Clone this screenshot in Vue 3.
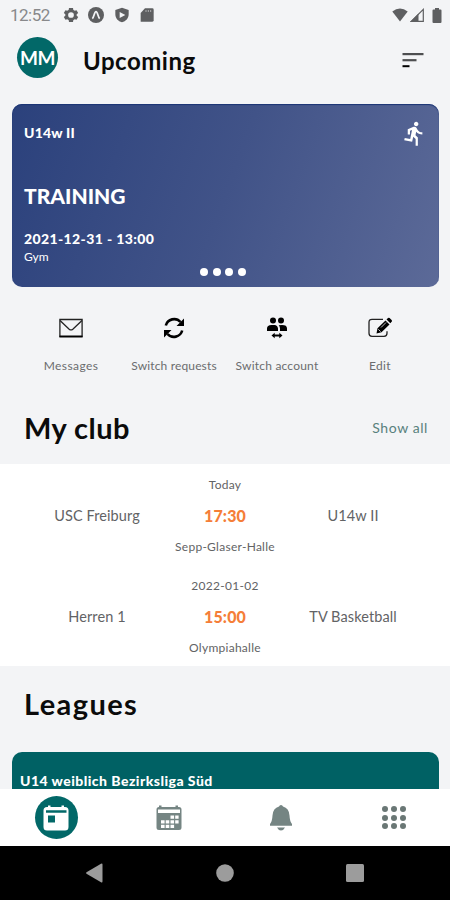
<template>
    <div class="phone">
        <!-- Status bar -->
        <div class="status">
            <span class="clock">12:52</span>
            <svg class="st-gear" viewBox="0 0 24 24"><path fill-rule="evenodd" d="M20.500 13.200a8 8 0 0 0 0-2.400l2.300-1.800-2.500-4.300-2.800 1.100a8 8 0 0 0-2-1.200L15 1.500H9l-.5 3.100a8 8 0 0 0-2 1.200L3.700 4.700 1.200 9l2.300 1.800a8 8 0 0 0 0 2.400L1.200 15l2.500 4.300 2.800-1.100a8 8 0 0 0 2 1.200l.5 3.100h6l.5-3.100a8 8 0 0 0 2-1.200l2.800 1.100 2.500-4.300zM12 16.300a4.300 4.300 0 1 1 0-8.600 4.300 4.300 0 0 1 0 8.600z" /></svg>
            <svg class="st-app" viewBox="0 0 24 24"><circle cx="12" cy="12" r="12" /><path class="line" d="M6.500 17.500C9 15.500 9.500 7 12 7s3 8.500 5.500 10.500" /></svg>
            <svg class="st-shield" viewBox="0 0 24 24"><path fill-rule="evenodd" d="M12 1 2 4.500V11c0 6 4.200 10.500 10 12 5.800-1.500 10-6 10-12V4.500zM8.500 7.500l8.500 4.500-8.500 4.500z" /></svg>
            <svg class="st-sd" viewBox="0 0 24 24"><path d="M20 2H9L2.500 9v13H20q2 0 2-2V4q0-2-2-2z" /><path class="pins" d="M10.500 4.500v3M14 4.500v3M17.500 4.500v3" /></svg>
            <div class="status-right">
                <svg class="st-wifi" viewBox="0 0 16 14"><path d="M8 13.500.3 3.500Q8-2.500 15.700 3.500z" /></svg>
                <svg class="st-signal" viewBox="0 0 14 14"><path d="M0 14 8.500 5.500V14z" /><path class="outline" d="M1.300 13.400 13.300 1.400v12z" /></svg>
                <svg class="st-battery" viewBox="0 0 10 15"><path d="M3 0h4v1.500h1.500q1 0 1 1V14q0 1-1 1h-7q-1 0-1-1V2.500q0-1 1-1H3z" /></svg>
            </div>
        </div>

        <!-- Header -->
        <header class="header">
            <div class="avatar"><span>MM</span></div>
            <h1>Upcoming</h1>
            <svg class="sort" viewBox="0 0 22 16"><path d="M.5 1h21v2.200H.5z" /><path d="M.5 7.100h14v2.200H.5z" /><path class="dark" d="M.5 13.200h7v2H.5z" /></svg>
        </header>

        <!-- Next event -->
        <section class="event">
            <div class="event-top">
                <span class="team">U14w II</span>
                <svg class="runner" viewBox="0 0 24 24"><path d="M13.490 5.480c1.100 0 2-.9 2-2s-.9-2-2-2-2 .9-2 2 .9 2 2 2zm-3.600 13.900 1-4.400 2.100 2v6h2v-7.500l-2.100-2 .6-3c1.300 1.500 3.300 2.500 5.500 2.500v-2c-1.900 0-3.500-1-4.300-2.400l-1-1.600c-.4-.6-1-1-1.700-1-.3 0-.5.1-.8.1l-5.200 2.200v4.700h2v-3.400l1.800-.7-1.600 8.100-4.900-1-.4 2z" /></svg>
            </div>
            <h2>TRAINING</h2>
            <p class="date">2021-12-31 - 13:00</p>
            <p class="place">Gym</p>
            <div class="dots"><i v-for="n in 4" :key="n"></i></div>
        </section>

        <!-- Quick actions -->
        <nav class="actions">
            <div class="action">
                <svg viewBox="0 0 24 24"><path class="thin" d="M.9 3.500h22.200v17H.9z" /><path class="thin" d="m1 4.500 9.200 8.700q1.800 1.500 3.600 0L23 4.500" /><path class="thick" d="M.5 20.500h23" /></svg>
                <span class="l-messages">Messages</span>
            </div>
            <div class="action">
                <svg viewBox="0 0 24 24"><path class="arc" d="M3.800 9.500A8.600 8.600 0 0 1 18.500 6M20.200 14.500A8.600 8.600 0 0 1 5.500 18" /><path d="M22 2.500v7.500h-7.500zM2 21.500v-7.500h7.500z" /></svg>
                <span class="l-requests">Switch requests</span>
            </div>
            <div class="action">
                <svg viewBox="0 0 24 24"><circle cx="8" cy="4.500" r="3" /><circle cx="16" cy="4.500" r="3" /><path d="M2 15v-2.500q0-3.500 4.500-3.500h3q3 0 3.500 3.500V15zM13.700 9.300Q22 8 22 12.500V15h-7v-2.500q0-2-1.300-3.200z" /><path d="m6.500 19.500 3.200-2.700v1.700h4.600v-1.700l3.200 2.700-3.200 2.700v-1.700H9.700v1.700z" /></svg>
                <span class="l-account">Switch account</span>
            </div>
            <div class="action">
                <svg viewBox="0 0 24 24"><path class="thin" d="M15 3.300H4Q1 3.300 1 6.300v11q0 3 3 3h12q3 0 3-3v-2" /><path d="m9.500 12.200 8-7.800 4 4-8 7.800-5 1.300zM18.500 3.500l1.500-1.400q.8-.7 1.600 0l2 2q.8.800 0 1.600l-1.300 1.500z" /><path class="nib" d="m10.300 13.300 2.300 2.300M13 11.500l5-5" /></svg>
                <span class="l-edit">Edit</span>
            </div>
        </nav>

        <!-- My club -->
        <div class="section-head">
            <h3 class="t-club">My club</h3>
            <a>Show all</a>
        </div>
        <section class="matches">
            <div v-for="m in matches" :key="m.time" class="match">
                <span class="small">{{ m.day }}</span>
                <span class="side">{{ m.home }}</span>
                <span class="time">{{ m.time }}</span>
                <span class="side">{{ m.away }}</span>
                <span class="small">{{ m.hall }}</span>
            </div>
        </section>

        <!-- Leagues -->
        <div class="section-head leagues-head">
            <h3>Leagues</h3>
        </div>
        <section class="league">
            <span>U14 weiblich Bezirksliga Süd</span>
        </section>

        <!-- Tabs -->
        <nav class="tabs">
            <div class="tab">
                <div class="active">
                    <svg viewBox="0 0 28 28"><path fill-rule="evenodd" d="M6 1.500h2.500V3h11V1.500H22V3h1q3.500 0 3.500 3.500V23q0 3.500-3.500 3.500H5Q1.500 26.500 1.500 23V6.500Q1.500 3 5 3h1zM4 6.300v2.400h20.500V6.300zM6 11.500v7h7v-7z" /></svg>
                </div>
            </div>
            <div class="tab">
                <svg class="calendar" viewBox="0 0 28 28"><path d="M4 1.500h2.500V3h14V1.500H23V3h1q2.500 0 2.500 2.500v18q0 2.500-2.500 2.500H4q-2.500 0-2.500-2.500v-18Q1.500 3 4 3z" /><path class="gap" d="M3 5.500h22V9H3zM15.500 11.500h3.600v3.300h-3.600zM20.200 11.500h3.400v3.300h-3.400zM6 16.200h3.600v3.300H6zM10.700 16.200h3.600v3.300h-3.600zM15.500 16.200h3.600v3.300h-3.600zM20.200 16.200h3.400v3.300h-3.400zM6 20.700h3.600v3.300H6zM10.700 20.700h3.600v3.300h-3.600zM15.500 20.700h3.600v3.300h-3.600z" /></svg>
            </div>
            <div class="tab">
                <svg class="bell" viewBox="0 0 28 28"><path d="M14 1q1.500 0 2 1.500 6 1.500 6.500 9 .3 6 2.500 8.500v1.700H3V20q2.200-2.500 2.500-8.500.5-7.500 6.500-9Q12.500 1 14 1zM10 23.500h8q-1.500 3-4 3t-4-3z" /></svg>
            </div>
            <div class="tab">
                <div class="grid"><i v-for="n in 9" :key="n"></i></div>
            </div>
        </nav>

        <!-- System buttons -->
        <div class="system">
            <svg viewBox="0 0 20 20"><path d="M1.500 9.200q-1 .8 0 1.600L16 19.300q1.500.7 1.500-1V1.700q0-1.700-1.500-1z" /></svg>
            <svg viewBox="0 0 20 20"><circle cx="10" cy="10" r="8.800" /></svg>
            <svg viewBox="0 0 20 20"><rect x="1" y="1" width="18" height="18" rx="1.500" /></svg>
        </div>
    </div>
</template>

<script setup>
import { ref } from 'vue';

const matches = ref([
    { day: 'Today', home: 'USC Freiburg', time: '17:30', away: 'U14w II', hall: 'Sepp-Glaser-Halle' },
    { day: '2022-01-02', home: 'Herren 1', time: '15:00', away: 'TV Basketball', hall: 'Olympiahalle' }
]);
</script>

<style>
body {
    margin: 0;
}
</style>

<style scoped>
.phone {
    width: 450px;
    height: 900px;
    display: flex;
    flex-direction: column;
    overflow: hidden;
    background: #f3f4f6;
    color: #0b0b0b;
    font-family: Lato, "Open Sans", sans-serif;
}

.phone > * {
    flex-shrink: 0;
    box-sizing: border-box;
}

h1, h2, h3, p {
    margin: 0;
}

svg {
    display: block;
}

.status {
    height: 30px;
    display: flex;
    align-items: center;
    padding: 0 7px 0 10px;
    fill: #5e5f61;
}

.clock {
    width: 53px;
    font: 17px/30px Roboto, sans-serif;
    color: #88898b;
    letter-spacing: -0.5px;
}

.st-gear, .st-app, .st-shield, .st-sd {
    width: 16px;
    height: 16px;
}

.st-app { margin-left: 9px; }
.st-shield { margin-left: 10px; }
.st-sd { margin-left: 9px; }

.line {
    fill: none;
    stroke: #f3f4f6;
    stroke-width: 2.6;
}

.pins {
    stroke: #c0c1c3;
    stroke-width: 1.2;
}

.status-right {
    margin-left: auto;
    display: flex;
    align-items: center;
}

.st-wifi { width: 16px; height: 14px; }
.st-signal { width: 14px; height: 14px; margin: 0 8px 0 2px; }
.st-battery { width: 10px; height: 15px; margin-right: 1px; }

.outline {
    fill: none;
    stroke: #5e5f61;
    stroke-width: 1.2;
}

.header {
    height: 74px;
    display: flex;
    align-items: flex-start;
    padding: 7px 26px 0 17px;
}

.avatar {
    width: 41px;
    height: 41px;
    border-radius: 50%;
    background: #026868;
    color: #fff;
    text-align: center;
    font-size: 19px;
    font-weight: 700;
    line-height: 42px;
    letter-spacing: -0.5px;
}

.header h1 {
    margin-left: 25px;
    font-size: 24px;
    line-height: 30px;
    padding-top: 9px;
    flex: 1;
    letter-spacing: 0.5px;
}

.sort {
    width: 22px;
    height: 16px;
    margin-top: 15px;
    fill: #4d4e50;
}

.dark {
    fill: #000;
}

.event {
    height: 183px;
    margin: 0 11px 0 12px;
    padding: 0 12px;
    border-radius: 10px;
    background: linear-gradient(110deg, #2b417c 0%, #415388 50%, #5c6a98 100%);
    box-shadow: inset 0 1px 1px #1b3575;
    color: #fff;
    display: flex;
    flex-direction: column;
}

.event-top {
    height: 70px;
    display: flex;
    justify-content: space-between;
}

.team {
    font-size: 14px;
    font-weight: 900;
    line-height: 20px;
    padding-top: 19px;
    letter-spacing: 0.2px;
}

.runner {
    width: 27px;
    height: 27px;
    margin: 16px -1px 0 0;
    fill: #fff;
}

.event h2 {
    font-size: 21px;
    line-height: 26px;
    padding-top: 9px;
    font-weight: 900;
}

.date {
    font-size: 14px;
    font-weight: 900;
    line-height: 18px;
    padding-top: 21px;
    letter-spacing: 0.38px;
}

.place {
    font-size: 12px;
    line-height: 16px;
    padding-top: 1px;
}

.dots {
    display: flex;
    justify-content: center;
    gap: 4.8px;
    padding-top: 3px;
    margin-left: -5px;
}

.dots i {
    width: 8px;
    height: 8px;
    border-radius: 50%;
    background: #fff;
}

.actions {
    height: 113px;
    display: grid;
    grid-template-columns: repeat(4, 103px);
    padding: 29px 0 0 19.5px;
}

.action {
    display: flex;
    flex-direction: column;
    align-items: center;
    font-size: 12px;
    color: #6b6c6e;
    line-height: 16px;
    white-space: nowrap;
    gap: 18px;
}

.l-messages { letter-spacing: 0.4px; }
.l-requests { letter-spacing: 0.15px; }
.l-account { letter-spacing: 0.2px; }
.l-edit { letter-spacing: 0.3px; }

.action svg {
    width: 24px;
    height: 24px;
    fill: #000;
}

.action .thin {
    fill: none;
    stroke: #222;
    stroke-width: 1.3;
}

.thick {
    stroke: #000;
    stroke-width: 1.7;
}

.arc {
    fill: none;
    stroke: #000;
    stroke-width: 2.6;
}

.nib {
    fill: none;
    stroke: #f3f4f6;
    stroke-width: .8;
}

.section-head {
    height: 64px;
    display: flex;
    justify-content: space-between;
    padding: 10px 22px 0 24px;
}

.section-head h3 {
    font-size: 29px;
    line-height: 36px;
    letter-spacing: 1.4px;
}

.section-head .t-club {
    letter-spacing: 0.45px;
}

.section-head a {
    font-size: 14px;
    line-height: 36px;
    color: #58817d;
    letter-spacing: 0.6px;
}

.matches {
    height: 202px;
    background: #fff;
    padding: 10px 33px 0;
}

.match {
    height: 101px;
    display: grid;
    grid-template-columns: repeat(3, 128px);
    grid-template-rows: 20px 42px 20px;
    align-content: start;
    align-items: center;
    text-align: center;
    color: #626365;
    white-space: nowrap;
}

.small {
    grid-column: 1 / -1;
    font-size: 12px;
    letter-spacing: 0.27px;
}

.side {
    font-size: 14.5px;
    letter-spacing: 0.1px;
}

.time {
    font-size: 16px;
    font-weight: 900;
    color: #f57e38;
    letter-spacing: 0.1px;
}

.leagues-head {
    height: 86px;
    padding-top: 20px;
}

.league {
    height: 37px;
    margin: 0 11px 0 12px;
    padding: 19px 8px 0;
    overflow: hidden;
    border-radius: 10px 10px 0 0;
    background: #006164;
    color: #fff;
    font-size: 14px;
    font-weight: 900;
    line-height: 20px;
    white-space: nowrap;
    letter-spacing: 0.46px;
}

.tabs {
    height: 57px;
    background: #fff;
    display: grid;
    grid-template-columns: repeat(4, 1fr);
    align-items: center;
    justify-items: center;
}

.active {
    width: 43px;
    height: 43px;
    border-radius: 50%;
    background: #026868;
    display: flex;
    align-items: center;
    justify-content: center;
}

.active svg {
    width: 28px;
    height: 28px;
    fill: #fff;
}

.calendar, .bell {
    width: 28px;
    height: 28px;
    fill: #758583;
}

.gap {
    fill: #fff;
}

.grid {
    display: grid;
    grid-template-columns: repeat(3, 6px);
    gap: 2.8px;
}

.grid i {
    width: 6px;
    height: 6px;
    border-radius: 50%;
    background: #6a7775;
}

.system {
    height: 54px;
    background: #000;
    display: grid;
    grid-template-columns: repeat(3, 130px);
    justify-content: center;
    justify-items: center;
    align-items: center;
    fill: #9c9c9c;
}

.system svg {
    width: 20px;
    height: 20px;
}
</style>
